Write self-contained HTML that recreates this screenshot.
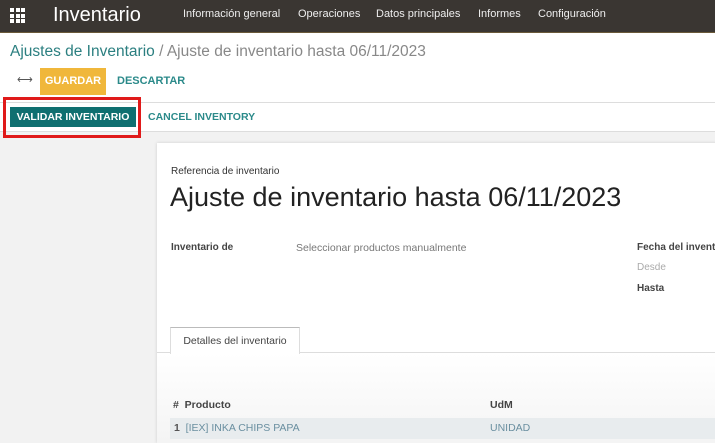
<!DOCTYPE html><html><head><style>
body{margin:0;width:715px;height:439px;overflow:hidden;background:#f2f2f2;font-family:"Liberation Sans",sans-serif;position:relative}
.a{position:absolute;white-space:nowrap}
</style></head><body>
<div class="a" style="left:0;top:0;width:715px;height:32px;background:#3a3632;border-bottom:1px solid #6b5a3a"></div>
<div class="a" style="left:10px;top:8px;width:15px;height:15px;display:grid;grid-template-columns:repeat(3,4px);gap:1.5px">
<i style="background:#fff"></i><i style="background:#fff"></i><i style="background:#fff"></i><i style="background:#fff"></i><i style="background:#fff"></i><i style="background:#fff"></i><i style="background:#fff"></i><i style="background:#fff"></i><i style="background:#fff"></i></div>
<div class="a" style="left:53px;top:4px;color:#fff;font-size:20px">Inventario</div>
<div class="a" style="left:183px;top:8px;color:#eee;font-size:11px">Información general</div>
<div class="a" style="left:298px;top:8px;color:#eee;font-size:11px">Operaciones</div>
<div class="a" style="left:376px;top:8px;color:#eee;font-size:11px">Datos principales</div>
<div class="a" style="left:478px;top:8px;color:#eee;font-size:11px">Informes</div>
<div class="a" style="left:538px;top:8px;color:#eee;font-size:11px">Configuración</div>
<div class="a" style="left:0;top:33px;width:715px;height:69px;background:#fff;border-bottom:1px solid #ddd"></div>
<div class="a" style="left:10px;top:43px;font-size:15.5px;color:#2b7f80">Ajustes de Inventario <span style="color:#888">/ Ajuste de inventario hasta 06/11/2023</span></div>
<div class="a" style="left:17px;top:73px;font-size:11px;color:#555">⟷</div>
<div class="a" style="left:40px;top:68px;width:66px;height:27px;background:#f0b73b;color:#fff;font-size:11px;font-weight:bold;text-align:center;line-height:27px">GUARDAR</div>
<div class="a" style="left:117px;top:75px;font-size:11px;font-weight:bold;color:#2b8a8a">DESCARTAR</div>
<div class="a" style="left:0;top:103px;width:715px;height:28px;background:#fff;border-bottom:1px solid #ddd"></div>
<div class="a" style="left:10px;top:107px;width:126px;height:20px;background:#0f6f70;color:#fff;font-size:10.5px;font-weight:bold;text-align:center;line-height:20px">VALIDAR INVENTARIO</div>
<div class="a" style="left:3px;top:97px;width:138px;height:41px;border:3px solid #e01a1a;box-sizing:border-box"></div>
<div class="a" style="left:148px;top:111px;font-size:10.5px;font-weight:bold;color:#2b8a8a">CANCEL INVENTORY</div>
<div class="a" style="left:157px;top:143px;width:560px;height:300px;background:#fff;box-shadow:0 0 3px #ccc"></div>
<div class="a" style="left:171px;top:166px;font-size:10px;color:#333">Referencia de inventario</div>
<div class="a" style="left:170px;top:182px;font-size:27px;color:#222">Ajuste de inventario hasta 06/11/2023</div>
<div class="a" style="left:171px;top:242px;font-size:10px;font-weight:bold;color:#444">Inventario de</div>
<div class="a" style="left:296px;top:242px;font-size:10.5px;color:#777">Seleccionar productos manualmente</div>
<div class="a" style="left:637px;top:242px;font-size:10px;font-weight:bold;color:#444">Fecha del invent</div>
<div class="a" style="left:637px;top:262px;font-size:10px;color:#aaa">Desde</div>
<div class="a" style="left:637px;top:283px;font-size:10px;font-weight:bold;color:#444">Hasta</div>
<div class="a" style="left:157px;top:352px;width:560px;height:90px;background:linear-gradient(#fff,#f4f4f4);border-top:1px solid #ddd"></div>
<div class="a" style="left:170px;top:327px;width:128px;height:26px;background:#fff;border:1px solid #ddd;border-bottom:none;border-top:1px solid #bbb;font-size:10.5px;color:#444;text-align:center;line-height:26px">Detalles del inventario</div>
<div class="a" style="left:173px;top:399px;font-size:10.5px;font-weight:bold;color:#444">#&nbsp; Producto</div>
<div class="a" style="left:490px;top:399px;font-size:10.5px;font-weight:bold;color:#444">UdM</div>
<div class="a" style="left:170px;top:418px;width:545px;height:21px;background:#e8ecee"></div>
<div class="a" style="left:174px;top:422px;font-size:10.5px;color:#6a8fa0"><b style="color:#555">1</b>&nbsp; [IEX] INKA CHIPS PAPA</div>
<div class="a" style="left:490px;top:422px;font-size:10.5px;color:#6a8fa0">UNIDAD</div>
</body></html>
